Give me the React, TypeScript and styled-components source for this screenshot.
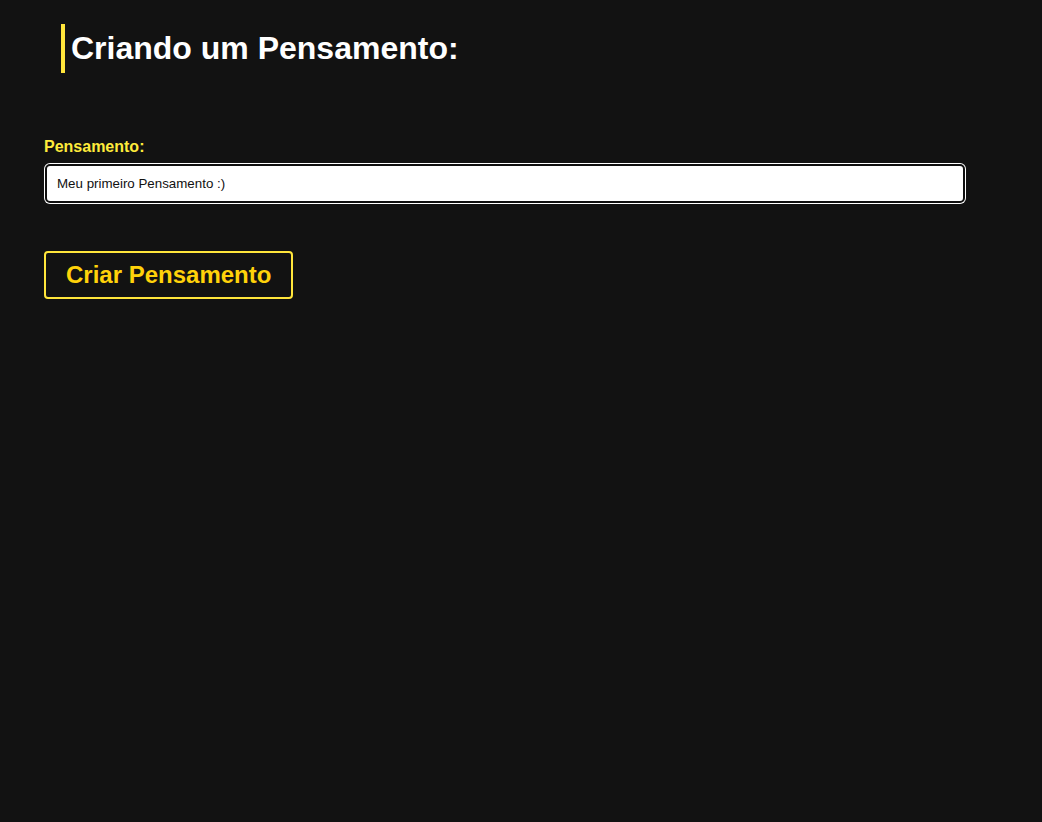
import React from "react";
import styled, { createGlobalStyle } from "styled-components";

const Global = createGlobalStyle`
  html, body { margin: 0; padding: 0; background: #121212; }
  body { font-family: "Liberation Sans", Arial, sans-serif; min-height: 822px; }
`;

const Page = styled.main`
  padding: 24px 0 0 44px;
`;

const TitleBlock = styled.div`
  margin-left: 17px;
  border-left: 4px solid #ffe53b;
  padding: 6px 0 6px 6px;
`;

const Title = styled.h1`
  margin: 0;
  font-size: 32px;
  line-height: 37px;
  font-weight: 700;
  color: #ffffff;
`;

const Form = styled.form`
  margin-top: 65px;
  display: flex;
  flex-direction: column;
  align-items: flex-start;
`;

const Field = styled.div`
  display: flex;
  flex-direction: column;
  gap: 8px;
`;

const Label = styled.label`
  font-size: 16px;
  line-height: 18px;
  font-weight: 700;
  color: #ffeb3b;
`;

const Input = styled.input`
  box-sizing: border-box;
  width: 920px;
  height: 39px;
  margin-left: 1px;
  padding: 0 10px;
  border: 2px solid #101010;
  border-radius: 5px;
  box-shadow: 0 0 0 1px #ffffff;
  background: #ffffff;
  color: #111111;
  font-family: "Liberation Sans", Arial, sans-serif;
  font-size: 13.333px;
  outline: none;
  caret-color: #000;
`;

const Submit = styled.button`
  margin-top: 48px;
  padding: 8px 20px;
  background: transparent;
  border: 2px solid #ffe53b;
  border-radius: 4px;
  color: #ffd20a;
  font-family: "Liberation Sans", Arial, sans-serif;
  font-size: 24px;
  line-height: 28px;
  font-weight: 700;
  cursor: pointer;
`;

export default function App() {
  return (
    <>
      <Global />
      <Page>
        <TitleBlock>
          <Title>Criando um Pensamento:</Title>
        </TitleBlock>
        <Form onSubmit={(e) => e.preventDefault()}>
          <Field>
            <Label htmlFor="title">Pensamento:</Label>
            <Input id="title" defaultValue="Meu primeiro Pensamento :)" autoFocus />
          </Field>
          <Submit type="submit">Criar Pensamento</Submit>
        </Form>
      </Page>
    </>
  );
}
